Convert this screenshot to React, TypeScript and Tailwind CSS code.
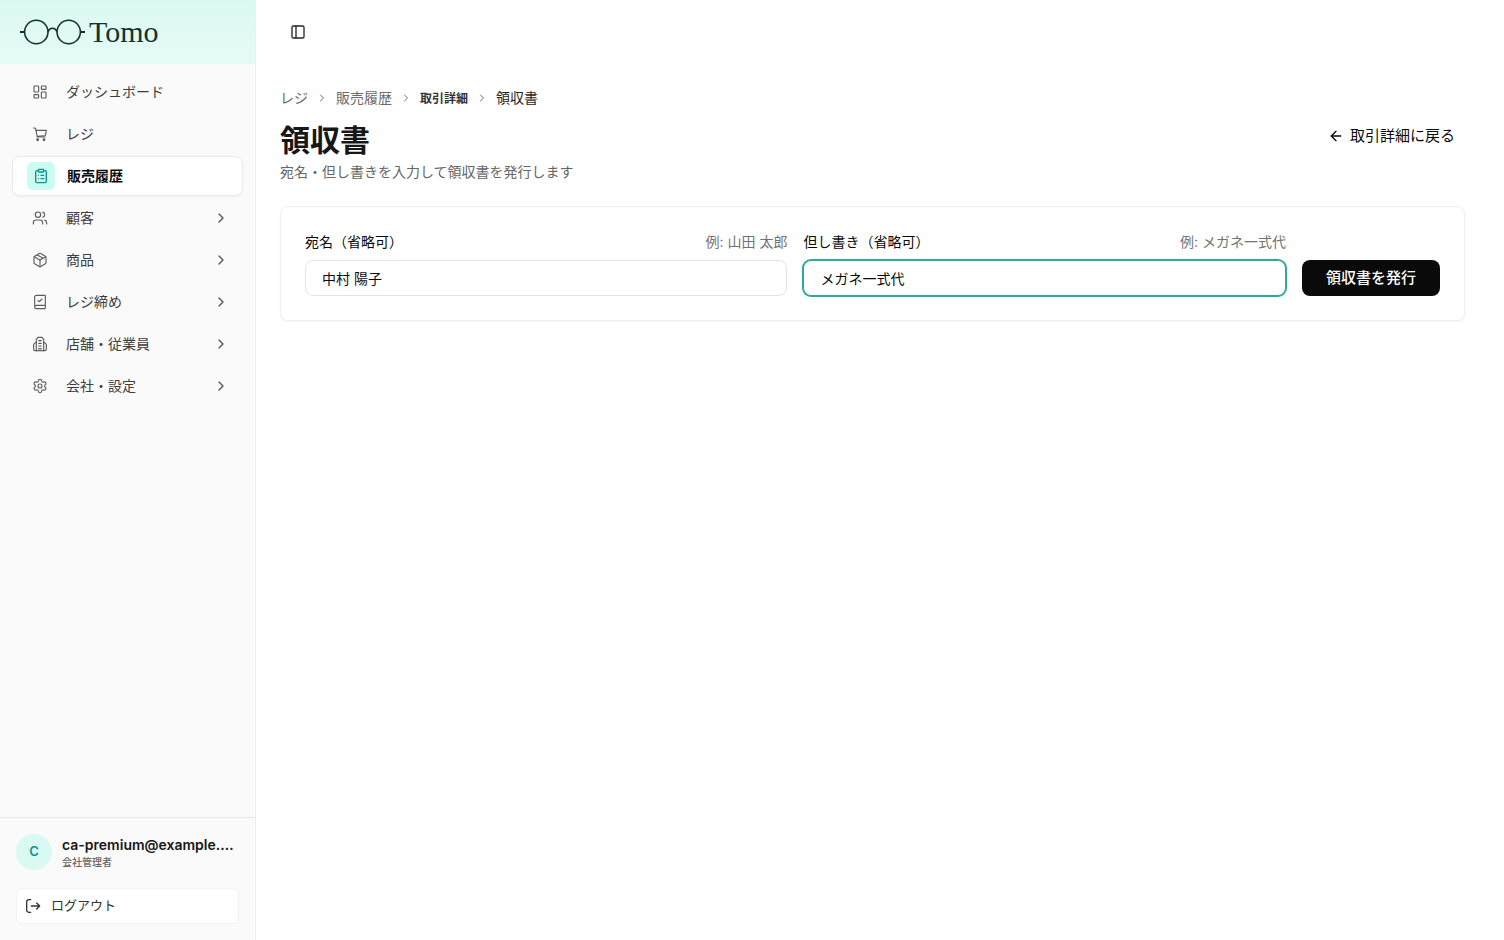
import type { ReactNode } from 'react';
import {
    ArrowLeft,
    BookCheck,
    ChevronRight,
    ClipboardList,
    LayoutDashboard,
    Package,
    PanelLeft,
    Settings,
    Users,
} from 'lucide-react';

interface NavItem {
    label: string;
    icon: ReactNode;
    active?: boolean;
    hasChildren?: boolean;
}

function CartIcon() {
    return (
        <svg className="size-4" viewBox="0 0 24 24" fill="none" stroke="currentColor" strokeWidth="1.7" strokeLinecap="round" strokeLinejoin="round" aria-hidden="true">
            <path d="M2.500 3H4a1.500 1.500 0 0 1 1.500 1.200L8 16.500h11.500" />
            <path d="M5.800 6.500H21.500l-1.300 7.200a1.500 1.500 0 0 1-1.400 1.100L7.700 15.500" />
            <circle cx="8.500" cy="20.500" r="1.300" fill="currentColor" />
            <circle cx="18" cy="20.500" r="1.300" fill="currentColor" />
        </svg>
    );
}

function BuildingIcon() {
    return (
        <svg className="size-4" viewBox="0 0 24 24" fill="none" stroke="currentColor" strokeWidth="1.7" strokeLinecap="round" strokeLinejoin="round" aria-hidden="true">
            <path d="M6.500 22V5l2.500-3h6l2.500 3v17" />
            <path d="M6.500 10H5l-2.500 2.500v7.500a2 2 0 0 0 2 2h15a2 2 0 0 0 2-2v-7.500L19 10h-1.500" />
            <path d="M10 7h4M10 11h4M10 15h4M10 19h4" />
        </svg>
    );
}

function LogoutIcon() {
    return (
        <svg className="size-4" viewBox="0 0 24 24" fill="none" stroke="currentColor" strokeWidth="2" strokeLinecap="round" strokeLinejoin="round" aria-hidden="true">
            <path d="M8.500 2.500H6a3.500 3.500 0 0 0-3.500 3.500v12A3.500 3.500 0 0 0 6 21.500h2.500" />
            <path d="M9.500 12H22M17.500 7.500 22 12l-4.500 4.500" />
        </svg>
    );
}

const navItems: NavItem[] = [
    { label: 'ダッシュボード', icon: <LayoutDashboard className="size-4" strokeWidth={1.7} /> },
    { label: 'レジ', icon: <CartIcon /> },
    { label: '販売履歴', icon: <ClipboardList className="size-4" strokeWidth={2} />, active: true },
    { label: '顧客', icon: <Users className="size-4" strokeWidth={1.7} />, hasChildren: true },
    { label: '商品', icon: <Package className="size-4" strokeWidth={1.7} />, hasChildren: true },
    { label: 'レジ締め', icon: <BookCheck className="size-4" strokeWidth={1.7} />, hasChildren: true },
    { label: '店舗・従業員', icon: <BuildingIcon />, hasChildren: true },
    { label: '会社・設定', icon: <Settings className="size-4" strokeWidth={1.7} />, hasChildren: true },
];

function Logo() {
    return (
        <a href="#" className="flex items-center gap-1 text-[#12332d]">
            <svg width="65" height="26" viewBox="0 0 65 26" fill="none" stroke="currentColor" strokeWidth="1.6" aria-hidden="true">
                <circle cx="16.3" cy="13" r="11.7" />
                <circle cx="48.7" cy="13" r="11.7" />
                <path d="M28 12.6c1-2.6 2.600-3.400 4.500-3.400s3.500.8 4.500 3.400" />
                <path d="M0 13h4.600M60.400 13H65" strokeWidth="2.2" />
            </svg>
            <span className="font-['Liberation_Serif',serif] text-[30px] leading-8">Tomo</span>
        </a>
    );
}

function Sidebar() {
    return (
        <aside className="flex w-64 shrink-0 flex-col border-r border-[#efefef] bg-[#fafafa]">
            <div className="flex h-16 items-center bg-linear-to-b from-[#dbf9f2] to-[#e6faf5] px-5">
                <Logo />
            </div>

            <nav className="flex flex-1 flex-col gap-[2px] px-3 pt-2">
                {navItems.map((item) => (
                    <a
                        key={item.label}
                        href="#"
                        aria-current={item.active ? 'page' : undefined}
                        className={`flex h-10 items-center gap-3 rounded-lg px-[14px] text-sm ${
                            item.active
                                ? 'border border-[#ececec] bg-white font-bold text-[#0a0a0a] shadow-xs'
                                : 'text-[#3d3d3d]'
                        }`}
                    >
                        <span
                            className={`flex size-7 items-center justify-center rounded-md ${
                                item.active ? 'bg-[#cbfbf1] text-[#0d9488]' : 'text-[#5c5c5c]'
                            }`}
                        >
                            {item.icon}
                        </span>
                        <span className="flex-1">{item.label}</span>
                        {item.hasChildren && <ChevronRight className="size-4 text-[#555555]" strokeWidth={2} />}
                    </a>
                ))}
            </nav>

            <div className="border-t border-[#e8e8e8] p-4">
                <div className="flex items-center gap-[10px]">
                    <div className="flex size-9 shrink-0 items-center justify-center rounded-full bg-[#d8faf2] text-[13px] font-semibold text-[#0d9488]">
                        C
                    </div>
                    <div className="flex-1 whitespace-nowrap">
                        <p className="text-sm leading-5 font-semibold text-[#171717]">ca-premium@example.…</p>
                        <p className="text-[10px] leading-[14px] font-medium text-[#666666]">会社管理者</p>
                    </div>
                </div>
                <button
                    type="button"
                    className="mt-[18px] flex h-9 w-full items-center gap-[10px] rounded-md border border-[#f2f2f2] bg-white px-2 text-[13px] text-[#333333]"
                >
                    <LogoutIcon />
                    ログアウト
                </button>
            </div>
        </aside>
    );
}

function Breadcrumb() {
    return (
        <nav aria-label="パンくず" className="text-sm text-[#6b6b6b]">
            <ol className="flex items-center gap-2">
                <li>
                    <a href="#">レジ</a>
                </li>
                <ChevronRight className="size-3" />
                <li>
                    <a href="#">販売履歴</a>
                </li>
                <ChevronRight className="size-3" />
                <li>
                    <a href="#" className="text-xs font-bold text-[#333333]">取引詳細</a>
                </li>
                <ChevronRight className="size-3" />
                <li aria-current="page" className="text-[#262626]">領収書</li>
            </ol>
        </nav>
    );
}

function ReceiptForm() {
    const inputClass = 'h-9 w-full rounded-lg border bg-white px-4 text-sm text-[#0a0a0a] outline-none';

    return (
        <form
            onSubmit={(e) => e.preventDefault()}
            className="mt-6 grid grid-cols-[1fr_1fr_auto] items-end gap-4 rounded-lg border border-[#f0f0f0] bg-white p-6 shadow-xs"
        >
            <div className="flex flex-col gap-2">
                <div className="flex items-center justify-between text-sm leading-[21px]">
                    <label htmlFor="recipient" className="text-[#0a0a0a]">宛名（省略可）</label>
                    <span className="text-[#737373]">例: 山田 太郎</span>
                </div>
                <input id="recipient" type="text" defaultValue="中村 陽子" className={`${inputClass} border-[#e5e5e5]`} />
            </div>
            <div className="flex flex-col gap-2">
                <div className="flex items-center justify-between text-sm leading-[21px]">
                    <label htmlFor="note" className="text-[#0a0a0a]">但し書き（省略可）</label>
                    <span className="text-[#737373]">例: メガネ一式代</span>
                </div>
                <input
                    id="note"
                    type="text"
                    defaultValue="メガネ一式代"
                    className={`${inputClass} border-[#2cab9c] ring-1 ring-[#2cab9c]`}
                />
            </div>
            <button type="submit" className="h-9 rounded-lg bg-[#0a0a0a] px-6 text-[15px] font-medium text-white">
                領収書を発行
            </button>
        </form>
    );
}

export default function App() {
    return (
        <div className="flex min-h-screen bg-white font-[Inter,'Noto_Sans_CJK_JP',sans-serif]" lang="ja">
            <Sidebar />
            <div className="flex min-w-0 flex-1 flex-col">
                <header className="flex h-16 items-center px-6">
                    <button type="button" aria-label="サイドバーを切り替え" className="flex size-9 items-center justify-center text-[#262626]">
                        <PanelLeft className="size-4" />
                    </button>
                </header>

                <main className="pt-6 pr-[39px] pl-6">
                    <Breadcrumb />
                    <div className="mt-[10px] flex items-start justify-between">
                        <div>
                            <h1 className="text-3xl leading-[44px] font-bold text-[#171717]">領収書</h1>
                            <p className="text-sm text-[#666666]">宛名・但し書きを入力して領収書を発行します</p>
                        </div>
                        <a href="#" className="flex h-9 items-center gap-[6px] px-[10px] text-[15px] text-[#0a0a0a]">
                            <ArrowLeft className="size-4" />
                            取引詳細に戻る
                        </a>
                    </div>
                    <ReceiptForm />
                </main>
            </div>
        </div>
    );
}
